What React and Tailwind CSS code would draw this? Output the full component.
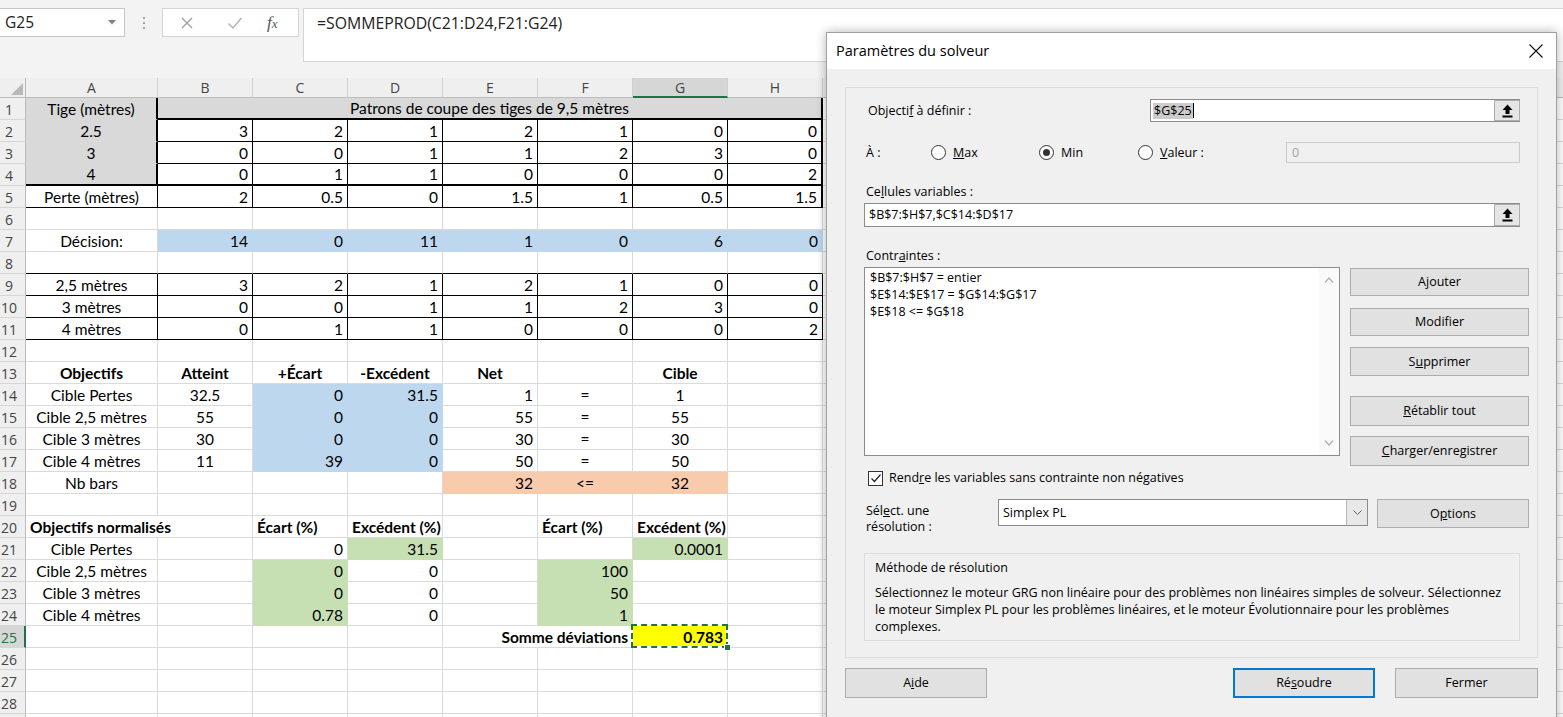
import React from 'react';

const FILL = {
  gray: { bg: 'bg-[#d9d9d9]', r: 'border-r border-r-[#d9d9d9]', b: 'border-b border-b-[#d9d9d9]' },
  blue: { bg: 'bg-[#bdd7ee]', r: 'border-r border-r-[#bdd7ee]', b: 'border-b border-b-[#bdd7ee]' },
  orange: { bg: 'bg-[#f8cbad]', r: 'border-r border-r-[#f8cbad]', b: 'border-b border-b-[#f8cbad]' },
  green: { bg: 'bg-[#c6e0b4]', r: 'border-r border-r-[#c6e0b4]', b: 'border-b border-b-[#c6e0b4]' },
  yellow: { bg: 'bg-[#ffff00]', r: 'border-r border-r-[#ffff00]', b: 'border-b border-b-[#ffff00]' },
};
const RB = { g: 'border-r border-r-[#dadada]', t: 'border-r border-r-black', T: 'border-r-2 border-r-black' };
const BB = { g: 'border-b border-b-[#dadada]', t: 'border-b border-b-black', T: 'border-b-2 border-b-black' };
const WID = { A: 'w-[132px]', A2: 'w-[227px]', 1: 'w-[95px]', 2: 'w-[190px]', 7: 'w-[665px]' };
const AL = { l: 'justify-start', c: 'justify-center', r: 'justify-end' };

const c = (t = '', a = 'r', o = {}) => ({ t, a, ...o });
const blank = (n, o = {}) => Array.from({ length: n }, () => c('', 'l', o));
const nums = (vals, o = {}, last = {}) =>
  vals.map((v, i) => c(String(v), 'r', i === vals.length - 1 ? { ...o, ...last } : o));

const ROWS = {
  1: [c('Tige (mètres)', 'c', { f: 'gray', r: 'T', w: 'A' }), c('Patrons de coupe des tiges de 9,5 mètres', 'c', { f: 'gray', w: 7, r: 'T', bb: 'T' })],
  2: [c('2.5', 'c', { f: 'gray', r: 'T', w: 'A' }), ...nums([3, 2, 1, 2, 1, 0, 0], { r: 't', bb: 't' }, { r: 'T' })],
  3: [c('3', 'c', { f: 'gray', r: 'T', w: 'A' }), ...nums([0, 0, 1, 1, 2, 3, 0], { r: 't', bb: 't' }, { r: 'T' })],
  4: [c('4', 'c', { f: 'gray', r: 'T', bb: 'T', w: 'A' }), ...nums([0, 1, 1, 0, 0, 0, 2], { r: 't', bb: 'T' }, { r: 'T' })],
  5: [c('Perte (mètres)', 'c', { r: 't', bb: 't', w: 'A' }), ...nums([2, '0.5', 0, '1.5', 1, '0.5', '1.5'], { r: 't', bb: 't' }, { r: 'T' })],
  6: [c('', 'l', { w: 'A' }), ...blank(7)],
  7: [c('Décision:', 'c', { w: 'A' }), ...nums([14, 0, 11, 1, 0, 6, 0], { f: 'blue' })],
  8: [c('', 'l', { w: 'A', bb: 't' }), ...blank(7, { bb: 't' })],
  9: [c('2,5 mètres', 'c', { w: 'A', r: 't', bb: 't' }), ...nums([3, 2, 1, 2, 1, 0, 0], { r: 't', bb: 't' })],
  10: [c('3 mètres', 'c', { w: 'A', r: 't', bb: 't' }), ...nums([0, 0, 1, 1, 2, 3, 0], { r: 't', bb: 't' })],
  11: [c('4 mètres', 'c', { w: 'A', r: 't', bb: 't' }), ...nums([0, 1, 1, 0, 0, 0, 2], { r: 't', bb: 't' })],
  12: [c('', 'l', { w: 'A' }), ...blank(7)],
  13: [
    c('Objectifs', 'c', { w: 'A', b: 1 }), c('Atteint', 'c', { b: 1 }), c('+Écart', 'c', { b: 1 }), c('-Excédent', 'c', { b: 1 }),
    c('Net', 'c', { b: 1 }), c(''), c('Cible', 'c', { b: 1 }), c(''),
  ],
  14: [c('Cible Pertes', 'c', { w: 'A' }), c('32.5', 'c'), c('0', 'r', { f: 'blue' }), c('31.5', 'r', { f: 'blue' }), c('1'), c('=', 'c'), c('1', 'c'), c('')],
  15: [c('Cible 2,5 mètres', 'c', { w: 'A' }), c('55', 'c'), c('0', 'r', { f: 'blue' }), c('0', 'r', { f: 'blue' }), c('55'), c('=', 'c'), c('55', 'c'), c('')],
  16: [c('Cible 3 mètres', 'c', { w: 'A' }), c('30', 'c'), c('0', 'r', { f: 'blue' }), c('0', 'r', { f: 'blue' }), c('30'), c('=', 'c'), c('30', 'c'), c('')],
  17: [c('Cible 4 mètres', 'c', { w: 'A' }), c('11', 'c'), c('39', 'r', { f: 'blue' }), c('0', 'r', { f: 'blue' }), c('50'), c('=', 'c'), c('50', 'c'), c('')],
  18: [c('Nb bars', 'c', { w: 'A' }), c(''), c(''), c(''), c('32', 'r', { f: 'orange' }), c('<=', 'c', { f: 'orange' }), c('32', 'c', { f: 'orange' }), c('')],
  19: [c('', 'l', { w: 'A' }), ...blank(7)],
  20: [
    c('Objectifs normalisés', 'l', { w: 'A2', b: 1 }), c('Écart (%)', 'l', { b: 1 }), c('Excédent (%)', 'l', { b: 1 }), c(''),
    c('Écart (%)', 'l', { b: 1 }), c('Excédent (%)', 'l', { b: 1 }), c(''),
  ],
  21: [c('Cible Pertes', 'c', { w: 'A' }), c(''), c('0'), c('31.5', 'r', { f: 'green' }), c(''), c(''), c('0.0001', 'r', { f: 'green' }), c('')],
  22: [c('Cible 2,5 mètres', 'c', { w: 'A' }), c(''), c('0', 'r', { f: 'green' }), c('0'), c(''), c('100', 'r', { f: 'green' }), c(''), c('')],
  23: [c('Cible 3 mètres', 'c', { w: 'A' }), c(''), c('0', 'r', { f: 'green' }), c('0'), c(''), c('50', 'r', { f: 'green' }), c(''), c('')],
  24: [c('Cible 4 mètres', 'c', { w: 'A' }), c(''), c('0.78', 'r', { f: 'green' }), c('0'), c(''), c('1', 'r', { f: 'green' }), c(''), c('')],
  25: [c('', 'l', { w: 'A' }), c(''), c(''), c(''), c('Somme déviations', 'r', { w: 2, b: 1 }), c('0.783', 'r', { f: 'yellow', b: 1, sel: 1 }), c('')],
};

function Cell({ cell }) {
  const f = cell.f ? FILL[cell.f] : null;
  const w = WID[cell.w || 1];
  const r = cell.r ? RB[cell.r] : f ? f.r : RB.g;
  const b = cell.bb ? BB[cell.bb] : f ? f.b : BB.g;
  if (cell.sel) {
    return (
      <div className={`${w} h-full shrink-0 relative ${r} ${b}`}>
        <div className="absolute left-[-2px] top-[-2px] right-[-1px] bottom-[-1px] border-2 border-white bg-[#ffff00]"></div>
        <div className="absolute left-[-2px] top-[-2px] right-[-1px] bottom-[-1px] border-2 border-dashed border-[#217346]"></div>
        <div className="absolute inset-0 flex items-center justify-end px-[4px] pt-[2px] font-bold">{cell.t}</div>
        <div className="absolute right-[-4px] bottom-[-4px] w-[7px] h-[7px] bg-[#217346] border border-white"></div>
      </div>
    );
  }
  return (
    <div className={`${w} h-full shrink-0 flex items-center px-[4px] pt-[2px] whitespace-nowrap ${AL[cell.a]} ${f ? f.bg : ''} ${r} ${b} ${cell.b ? 'font-bold' : ''}`}>
      {cell.t}
    </div>
  );
}

function RowHeader({ n, sel }) {
  return (
    <div
      className={`w-[26px] h-full shrink-0 flex items-center pt-[1px] border-b border-b-[#d6d6d6] font-['Open_Sans',sans-serif] text-[14px] ${
        sel ? 'bg-[#d6d6d6] border-r-2 border-r-[#217346] text-[#217346]' : 'bg-[#efefef] border-r border-r-[#bcbcbc] text-[#444]'
      }`}
    >
      <span className="w-[18px] text-center">{n}</span>
    </div>
  );
}

function Sheet() {
  const cols = ['A', 'B', 'C', 'D', 'E', 'F', 'G', 'H', 'I', 'J', 'K', 'L', 'M', 'N', 'O', 'P'];
  const rowNums = Array.from({ length: 29 }, (_, i) => i + 1);
  return (
    <div className="font-['Lato',sans-serif] text-[15.5px] text-black">
      <div className="flex h-[20px]">
        <div className="w-[26px] h-full shrink-0 bg-[#efefef] border-r border-r-[#bcbcbc] border-b border-b-[#bcbcbc] flex items-end justify-end p-[2px]">
          <svg width="12" height="12" viewBox="0 0 12 12"><polygon points="12,0 12,12 0,12" fill="#b8b8b8" /></svg>
        </div>
        {cols.map((l) => {
          const sel = l === 'G';
          return (
            <div
              key={l}
              className={`${l === 'A' ? 'w-[132px]' : 'w-[95px]'} h-full shrink-0 flex items-center justify-center font-['Open_Sans',sans-serif] text-[14px] text-[#444] border-r border-r-[#d0d0d0] ${
                sel ? 'bg-[#d6d6d6] border-b-2 border-b-[#217346]' : 'bg-[#efefef] border-b border-b-[#bcbcbc]'
              }`}
            >
              {l}
            </div>
          );
        })}
      </div>
      {rowNums.map((n) => {
        const cells = ROWS[n] || [c('', 'l', { w: 'A' }), ...blank(7)];
        return (
          <div key={n} className="flex h-[22px]">
            <RowHeader n={n <= 28 ? n : ''} sel={n === 25} />
            {cells.map((cell, i) => (
              <Cell key={i} cell={cell} />
            ))}
            {blank(8).map((cell, i) => (
              <Cell key={'x' + i} cell={cell} />
            ))}
          </div>
        );
      })}
    </div>
  );
}

function FormulaBar() {
  return (
    <div className="h-[78px] bg-[#f3f3f3] pt-[8px] font-['Open_Sans',sans-serif]">
      <div className="flex items-start">
        <div className="w-[125px] h-[29px] bg-white border border-l-0 border-[#c6c6c6] flex items-center pl-[5px] pr-[8px] text-[15.5px] text-[#222]">
          <span>G25</span>
          <svg className="ml-auto" width="8" height="5" viewBox="0 0 8 5"><polygon points="0,0 8,0 4,4.5" fill="#808080" /></svg>
        </div>
        <div className="w-[37px] h-[29px] flex flex-col items-center justify-center gap-[3px]">
          <div className="w-[2px] h-[2px] bg-[#a6a6a6]"></div>
          <div className="w-[2px] h-[2px] bg-[#a6a6a6]"></div>
          <div className="w-[2px] h-[2px] bg-[#a6a6a6]"></div>
        </div>
        <div className="w-[137px] h-[29px] bg-white border border-[#d4d4d4] flex items-center pl-[17px]">
          <svg width="14" height="14" viewBox="0 0 14 14"><path d="M2 2 L12 12 M12 2 L2 12" stroke="#a0a0a0" strokeWidth="1.4" /></svg>
          <svg className="ml-[33px]" width="16" height="14" viewBox="0 0 16 14"><path d="M1.5 7.5 L6 12 L14.5 2" stroke="#b4b4b4" strokeWidth="1.5" fill="none" /></svg>
          <span className="ml-[24px] font-['Liberation_Serif',serif] italic text-[17px] text-[#555] leading-none">
            f<span className="text-[13px]">x</span>
          </span>
        </div>
        <div className="ml-[4px] flex-1 h-[54px] bg-white border border-r-0 border-[#d4d4d4] pl-[13px] pt-[3px] text-[15.8px] text-[#222]">
          =SOMMEPROD(C21:D24,F21:G24)
        </div>
      </div>
    </div>
  );
}

function UploadBtn() {
  return (
    <div className="w-[26px] h-full shrink-0 bg-[#e5e5e5] border border-[#adadad] flex items-center justify-center">
      <svg width="11" height="14" viewBox="0 0 11 14">
        <polygon points="5.5,0.5 10.5,6 7.5,6 7.5,10 3.5,10 3.5,6 0.5,6" fill="#000" />
        <rect x="0.5" y="11.5" width="10" height="2" fill="#000" />
      </svg>
    </div>
  );
}

function Radio({ on }) {
  return (
    <div className="w-[15px] h-[15px] rounded-full border border-[#333] bg-white flex items-center justify-center shrink-0">
      {on ? <div className="w-[7px] h-[7px] rounded-full bg-[#333]"></div> : null}
    </div>
  );
}

function Btn({ children, className = '' }) {
  return (
    <div className={`w-full bg-[#e1e1e1] border border-[#adadad] flex items-center justify-center ${className}`}>{children}</div>
  );
}

function Solver() {
  return (
    <div className="absolute left-[826px] top-[32px] w-[731px] h-[700px] bg-[#f0f0f0] border border-[#a0a0a0] shadow-[0_0_10px_rgba(0,0,0,0.3)] font-['Open_Sans',sans-serif] text-[12.5px] leading-[16px] text-black">
      <div className="h-[36px] bg-white flex items-center pl-[9px] pr-[12px]">
        <span className="text-[14.5px]">Paramètres du solveur</span>
        <svg className="ml-auto" width="16" height="16" viewBox="0 0 16 16"><path d="M1.5 1.5 L14.5 14.5 M14.5 1.5 L1.5 14.5" stroke="#111" strokeWidth="1.1" /></svg>
      </div>
      <div className="px-[18px] pt-[18px]">
        <div className="h-[571px] border border-[#dcdcdc] pl-[18px] pr-[17px] pt-[11px] flex flex-col">
          <div className="flex h-[23px] items-center">
            <div className="w-[286px] pl-[4px]">
              Objecti<u>f</u> à définir :
            </div>
            <div className="flex-1 h-full flex bg-white border border-[#8c8c8c] border-r-0">
              <div className="flex-1 flex items-center pl-[2px]">
                <span className="bg-[#cccccc] px-[1px]">$G$25</span>
                <span className="w-[1px] h-[15px] bg-black"></span>
              </div>
              <UploadBtn />
            </div>
          </div>
          <div className="flex h-[22px] items-center mt-[19px] pt-[1px]">
            <div className="w-[67px] pl-[2px]">À :</div>
            <div className="w-[108px] flex items-center">
              <Radio />
              <span className="ml-[7px]"><u>M</u>ax</span>
            </div>
            <div className="w-[99px] flex items-center">
              <Radio on />
              <span className="ml-[7px]">Min</span>
            </div>
            <div className="w-[148px] flex items-center">
              <Radio />
              <span className="ml-[7px]"><u>V</u>aleur :</span>
            </div>
            <div className="flex-1 h-full bg-[#f0f0f0] border border-[#cccccc] flex items-center pl-[5px] text-[#a0a0a0]">0</div>
          </div>
          <div className="mt-[20px] h-[16px] pl-[2px] pt-[1px]">
            Ce<u>l</u>lules variables :
          </div>
          <div className="mt-[4px] h-[24px] flex bg-white border border-[#8c8c8c] border-r-0">
            <div className="flex-1 flex items-center pl-[4px]">$B$7:$H$7,$C$14:$D$17</div>
            <UploadBtn />
          </div>
          <div className="mt-[20px] h-[16px] pl-[2px] pt-[1px]">
            Contr<u>a</u>intes :
          </div>
          <div className="mt-[4px] h-[199px] flex items-start">
            <div className="w-[476px] h-[189px] shrink-0 bg-white border border-[#8c8c8c] flex">
              <div className="flex-1 pl-[5px] pt-[1px] leading-[17px]">
                <div>$B$7:$H$7 = entier</div>
                <div>$E$14:$E$17 = $G$14:$G$17</div>
                <div>$E$18 &lt;= $G$18</div>
              </div>
              <div className="w-[20px] h-full bg-[#fafafa] flex flex-col items-center justify-between py-[9px]">
                <svg width="10" height="6" viewBox="0 0 10 6"><path d="M1 5.5 L5 1 L9 5.5" stroke="#b0b0b0" strokeWidth="1.2" fill="none" /></svg>
                <svg width="10" height="6" viewBox="0 0 10 6"><path d="M1 0.5 L5 5 L9 0.5" stroke="#b0b0b0" strokeWidth="1.2" fill="none" /></svg>
              </div>
            </div>
            <div className="w-[179px] shrink-0 ml-[10px] flex flex-col">
              <Btn className="mt-[1px] h-[28px]">A<u>j</u>outer</Btn>
              <Btn className="mt-[12px] h-[28px]">Modifier</Btn>
              <Btn className="mt-[11px] h-[29px]">S<u>u</u>pprimer</Btn>
              <Btn className="mt-[20px] h-[30px]"><u>R</u>établir tout</Btn>
              <Btn className="mt-[10px] h-[30px]"><u>C</u>harger/enregistrer</Btn>
            </div>
          </div>
          <div className="h-[24px] flex items-center pl-[4px]">
            <div className="w-[15px] h-[15px] bg-white border border-[#333] flex items-center justify-center">
              <svg width="12" height="12" viewBox="0 0 12 12"><path d="M1.5 6.5 L4.5 9.5 L10.5 2.5" stroke="#222" strokeWidth="1.2" fill="none" /></svg>
            </div>
            <span className="ml-[6px]">Rend<u>r</u>e les variables sans contrainte non négatives</span>
          </div>
          <div className="mt-[9px] h-[36px] flex items-start">
            <div className="w-[134px] shrink-0 pl-[2px] pt-[4px] leading-[16px]">
              <div>Sél<u>e</u>ct. une</div>
              <div>résolution :</div>
            </div>
            <div className="w-[370px] h-[27px] shrink-0 bg-white border border-[#8c8c8c] flex">
              <div className="flex-1 flex items-center pl-[4px]">Simplex PL</div>
              <div className="w-[21px] h-full bg-[#e8e8e8] border-l border-l-[#b8b8b8] flex items-center justify-center">
                <svg width="9" height="5" viewBox="0 0 9 5"><path d="M0.5 0.5 L4.5 4.5 L8.5 0.5" stroke="#606060" strokeWidth="1" fill="none" /></svg>
              </div>
            </div>
            <div className="w-[152px] shrink-0 ml-[9px]">
              <Btn className="h-[29px]">O<u>p</u>tions</Btn>
            </div>
          </div>
          <div className="mt-[18px] h-[88px] border border-[#dcdcdc] pl-[10px] pr-[8px] pt-[6px]">
            <div>Méthode de résolution</div>
            <div className="mt-[8px] leading-[17px]">
              Sélectionnez le moteur GRG non linéaire pour des problèmes non linéaires simples de solveur. Sélectionnez le moteur Simplex PL pour les problèmes linéaires, et le moteur Évolutionnaire pour les problèmes complexes.
            </div>
          </div>
        </div>
        <div className="mt-[10px] flex h-[30px]">
          <div className="w-[142px]">
            <Btn className="h-[30px]">A<u>i</u>de</Btn>
          </div>
          <div className="flex-1"></div>
          <div className="w-[142px] h-[30px] bg-[#e1e1e1] border-2 border-[#0078d7] flex items-center justify-center">
            Ré<u>s</u>oudre
          </div>
          <div className="w-[143px] ml-[20px]">
            <Btn className="h-[30px]">Fermer</Btn>
          </div>
        </div>
      </div>
    </div>
  );
}

export default function App() {
  return (
    <div className="relative w-[1563px] h-[717px] overflow-hidden bg-white">
      <FormulaBar />
      <Sheet />
      <Solver />
    </div>
  );
}
